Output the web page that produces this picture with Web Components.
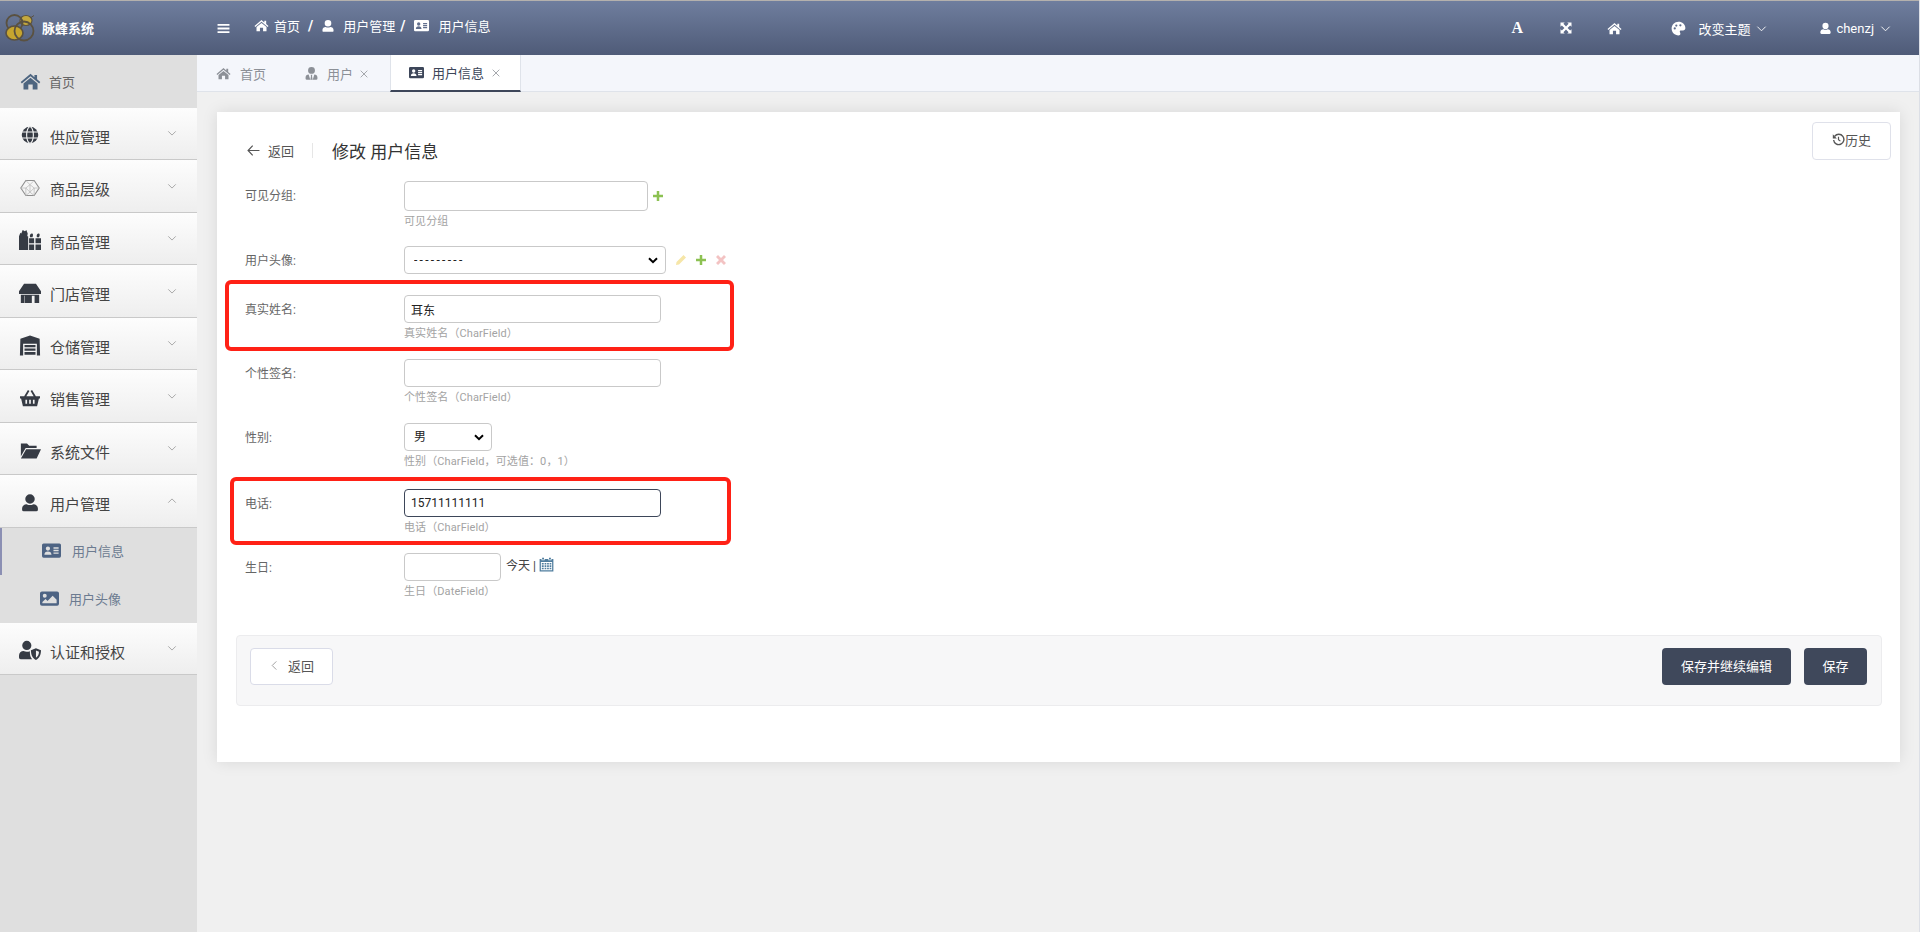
<!DOCTYPE html>
<html lang="zh">
<head>
<meta charset="utf-8">
<title>脉蜂系统</title>
<style>
  html, body { margin: 0; height: 100%; overflow: hidden; }
  body { background: #f0f0f0; font-family: Roboto, "Noto Sans CJK SC", sans-serif; font-size: 12px; color: #666; }
</style>
</head>
<body>
<admin-app>
  <top-bar slot="top"></top-bar>
  <side-menu slot="side">
    <side-item icon="home" home isize="21">首页</side-item>
    <side-item icon="globe" isize="18" chevron="down">供应管理</side-item>
    <side-item icon="hex" chevron="down">商品层级</side-item>
    <side-item icon="gifts" isize="22" chevron="down">商品管理</side-item>
    <side-item icon="store" isize="22" chevron="down">门店管理</side-item>
    <side-item icon="warehouse" isize="23" chevron="down">仓储管理</side-item>
    <side-item icon="basket" chevron="down">销售管理</side-item>
    <side-item icon="folder" isize="21" chevron="down">系统文件</side-item>
    <side-item icon="user" chevron="up">用户管理</side-item>
    <side-sub icon="idcard" active>用户信息</side-sub>
    <side-sub icon="image" style="--sub-left:40px;--sub-gap:10px">用户头像</side-sub>
    <side-item icon="usershield" isize="22" chevron="down" style="height:52px">认证和授权</side-item>
  </side-menu>
  <tab-strip slot="tabs">
    <tab-item icon="home" style="--tab-left:19px;--tab-right:38px;--tab-gap:9px">首页</tab-item>
    <tab-item icon="usertie" closable style="--tab-right:21px;--tab-left:0px;--tab-x:6px">用户</tab-item>
    <tab-item icon="idcard" closable active>用户信息</tab-item>
  </tab-strip>
  <edit-card slot="main">
    <red-mark style="left:8px;top:168px;width:509px;height:71px"></red-mark>
    <red-mark style="left:13px;top:365px;width:501px;height:68px"></red-mark>
    <form-row label="可见分组:" help="可见分组" rowh="65">
      <input style="width:244px;height:30px" aria-label="可见分组">
      <row-tools icons="plus"></row-tools>
    </form-row>
    <form-row label="用户头像:" rowh="49">
      <select style="width:262px;letter-spacing:2.3px" aria-label="用户头像"><option>---------</option></select>
      <row-tools icons="pencil plus cross" style="margin-left:9px"></row-tools>
    </form-row>
    <form-row label="真实姓名:" help="真实姓名（CharField）" rowh="64">
      <input style="width:257px" value="耳东" aria-label="真实姓名">
    </form-row>
    <form-row label="个性签名:" help="个性签名（CharField）" rowh="64">
      <input style="width:257px" aria-label="个性签名">
    </form-row>
    <form-row label="性别:" help="性别（CharField，可选值：0，1）" rowh="66">
      <select style="width:88px" aria-label="性别"><option>男</option></select>
    </form-row>
    <form-row label="电话:" help="电话（CharField）" rowh="64">
      <input class="focus" style="width:257px" value="15711111111" aria-label="电话">
    </form-row>
    <form-row label="生日:" help="生日（DateField）" rowh="82">
      <input style="width:97px" aria-label="生日">
      <today-link></today-link>
    </form-row>
    <submit-panel></submit-panel>
  </edit-card>
</admin-app>

<script>
const ICONS = {
  home: '<path d="M12 3.2.8 12.6l1.3 1.6L12 6l9.900 8.200 1.300-1.600-3.700-3.100v-5h-3V7zM12 7.800 4 14.400V21h5.500v-5.500h5V21H20v-6.600z"/>',
  user: '<path d="M12 1.500a5.700 5.700 0 1 1 0 11.400 5.700 5.700 0 0 1 0-11.400zM8 13.500c1.200.7 2.500 1 4 1s2.800-.3 4-1c3 0 5.500 2.200 5.500 5.200V20a2 2 0 0 1-2 2h-15a2 2 0 0 1-2-2v-1.300c0-3 2.500-5.200 5.500-5.200z"/>',
  usertie: '<path d="M12 1.500a5.500 5.500 0 1 1 0 11 5.500 5.500 0 0 1 0-11zM7.500 13.500 10 22H4.500a2 2 0 0 1-2-2v-1.500c0-3 2-5 5-5zM16.500 13.500c3 0 5 2 5 5V20a2 2 0 0 1-2 2H14zM10.700 14h2.600l-.5 2 1 6h-3.600l1-6z"/>',
  idcard: '<path fill-rule="evenodd" d="M2 3h20a2 2 0 0 1 2 2v14a2 2 0 0 1-2 2H2a2 2 0 0 1-2-2V5a2 2 0 0 1 2-2zM7.500 6.800a2.700 2.700 0 1 0 0 5.400 2.700 2.700 0 0 0 0-5.400zM3 17.500h9c0-2.800-1.700-4.300-4.500-4.300S3 14.700 3 17.500zM14.500 8v1.800h6.500V8zM14.500 11.200V13h6.500v-1.800zM14.500 14.400v1.800h6.500v-1.800z"/>',
  bars: '<path d="M1 3.500h22v3.600H1zM1 10.200h22v3.600H1zM1 16.900h22v3.600H1z"/>',
  globe: '<circle cx="12" cy="12" r="11"/><g fill="none" stroke="#f6f6f6" stroke-width="1.500"><ellipse cx="12" cy="12" rx="4.500" ry="11"/><path d="M1 8h22M1 16h22"/></g>',
  hex: '<g fill="none" stroke="#8f8f8f" stroke-width=".9"><path d="M7 3h10l6 9-6 9H7L1 12z" stroke-width="1.300"/><path d="M7 3 12 8l5-5M1 12h6l5-4 5 4h6M7 21V12M17 21V12M7 12l5 5 5-5M7 21l5-4 5 4M12 8v9" stroke="#b9b9b9"/></g>',
  gifts: '<path d="M0 8l1.500-4 1 .8L4 1l2.500 1.500L8 1l1.500 4-.5 3h1v15H0zM11 10h5.500v5.500H11zM18 10h6v5.500h-6zM11 17h5.500v6H11zM18 17h6v6h-6zM12 9c-.8-3 1.200-4.500 2.500-4 1 .4 1 2.500.2 4zM19.500 9c-.9-2.800 1-4.500 2.300-4 1 .4 1 2.500 0 4z"/>',
  store: '<path fill-rule="evenodd" d="M5.500 2h13L24 10v3H0v-3zM2 14h20v9h-5V15h-3v5H6.500v-5H6v8H2zM6.500 20h7.500v3H6.500z"/>',
  warehouse: '<path fill-rule="evenodd" d="M12 1 1.500 4.500 1 23h3.500V10h15v13H23l-.5-18.500zM6 11.500h12V14H6zM6 15.300h12v2.500H6zM6 19.100h12v3H6z"/>',
  basket: '<path fill-rule="evenodd" d="m5 10 4.500-7.500 1.800 1L7.600 10h8.800l-3.700-6.500 1.800-1L19 10h5v2.500h-1.300L20.500 22h-17L1.300 12.500H0V10zM6.500 14v5H8.500v-5zM11 14v5h2v-5zM15.500 14v5h2v-5z"/>',
  folder: '<path d="M1 4h7l2.500 2.500H19V9H6.500L1 18.500zM7 10.500h17L19 21H1z"/>',
  usershield: '<path fill-rule="evenodd" d="M8.500 2a5 5 0 1 1 0 10 5 5 0 0 1 0-10zM5 13.200c1 .5 2.200.8 3.500.8s2.300-.2 3.300-.6l.2 3.100c.2 2 1 4.200 2.500 5.500H1.800A1.800 1.800 0 0 1 0 20.200v-2C0 15.400 2.200 13.200 5 13.200zM18.500 10l5.500 2.300c0 4.700-1.500 8.700-5.500 10.700-4-2-5.500-6-5.500-10.700zM18.500 12.500v8c2.300-1.500 3.200-4 3.300-6.600z"/>',
  image: '<path fill-rule="evenodd" d="M2.500 3h19A2.500 2.500 0 0 1 24 5.500v13a2.500 2.500 0 0 1-2.500 2.500h-19A2.500 2.500 0 0 1 0 18.500v-13A2.500 2.500 0 0 1 2.500 3zM6 6a2.500 2.500 0 1 0 0 5 2.500 2.500 0 0 0 0-5zM3 18h18v-4.500L16 8.500 9.500 15l-2.500-2.500-4 4z"/>',
  palette: '<path fill-rule="evenodd" d="M12 1C5.800 1 1 5.800 1 12s5 11 11 11c1.900 0 3-1.200 3-2.800 0-1.500-1-2-1-3.300 0-1.100.8-1.900 2-1.900h3.200c2.200 0 3.800-1.700 3.800-4C23 5.200 18 1 12 1zM6 10a1.800 1.800 0 1 0 0 3.600A1.800 1.800 0 0 0 6 10zM8.500 5.500a1.800 1.800 0 1 0 0 3.600 1.800 1.800 0 0 0 0-3.600zM15 5a1.800 1.800 0 1 0 0 3.600A1.800 1.800 0 0 0 15 5z"/>',
  expand: '<path d="M1 1h8.500L6.800 3.700 12 8.900l5.200-5.200L14.500 1H23v8.500l-2.700-2.700L15.100 12l5.200 5.200 2.700-2.700V23h-8.500l2.700-2.700-5.200-5.200-5.200 5.200L9.500 23H1v-8.500l2.700 2.700L8.900 12 3.700 6.800 1 9.500z"/>',
  history: '<g fill="none" stroke="currentColor" stroke-width="2.600"><path d="M5 6a9.500 9.500 0 1 1-2 7"/><path d="M12 7v5.500l3.500 2.500" stroke-width="2.200"/></g><path d="M1.500 2.500v7.500H9z"/>',
  plus: '<path d="M9.500 2h5v7.500H22v5h-7.500V22h-5v-7.500H2v-5h7.500z"/>',
  cross: '<path d="m6 2 6 6 6-6 4 4-6 6 6 6-4 4-6-6-6 6-4-4 6-6-6-6z"/>',
  pencil: '<path d="M17 2l5 5L8 21l-6 1 1-6zM15 6l3 3"/>',
  calendar: '<path fill-rule="evenodd" d="M5 1h3v3H5zM16 1h3v3h-3zM1 3h3v2h5V3h6v2h5V3h3v20H1zM3 8v13h18V8zM4.500 9.500h3v2.500h-3zM9 9.500h2.700v2.500H9zM13 9.500h2.700v2.500H13zM17 9.500h2.700v2.500H17zM4.500 13.300h3v2.500h-3zM9 13.300h2.700v2.500H9zM13 13.300h2.700v2.500H13zM17 13.300h2.700v2.500H17zM4.500 17h3v2.500h-3zM9 17h2.700v2.500H9zM13 17h2.700v2.500H13zM17 17h2.700v2.500H17z"/>',
  down: '<path d="m3 8 9 9 9-9" fill="none" stroke="currentColor" stroke-width="2"/>',
  up: '<path d="m3 16 9-9 9 9" fill="none" stroke="currentColor" stroke-width="2"/>',
  left: '<path d="m16 3-9 9 9 9" fill="none" stroke="currentColor" stroke-width="2"/>',
  back: '<path d="M23 12H2M10.500 3 2 12l8.500 9" fill="none" stroke="currentColor" stroke-width="2.200"/>',
  close: '<path d="m4 4 16 16M20 4 4 20" fill="none" stroke="currentColor" stroke-width="2.400"/>'
};

class FaIcon extends HTMLElement {
  connectedCallback() {
    if (this.shadowRoot) return;
    const size = this.getAttribute('size') || 14;
    const root = this.attachShadow({ mode: 'open' });
    root.innerHTML = `
      <style>:host { display: inline-flex; flex: none; line-height: 0; } svg { display: block; fill: currentColor; }</style>
      <svg width="${size}" height="${size}" viewBox="0 0 24 24" aria-hidden="true">${ICONS[this.getAttribute('name')] || ''}</svg>`;
  }
}
customElements.define('fa-icon', FaIcon);

class AdminApp extends HTMLElement {
  constructor() {
    super();
    this.attachShadow({ mode: 'open' }).innerHTML = `
      <style>
        :host { display: grid; grid-template-columns: 197px 1fr; grid-template-rows: 55px 37px 1fr; height: 100vh; box-sizing: border-box; border-right: 1px solid #dcdfe6; }
        .top { grid-column: 1 / 3; display: block; }
        .side { grid-row: 2 / 4; background: #dfdfdf; }
        main { padding: 20px 19px 0 20px; min-width: 0; }
      </style>
      <div class="top"><slot name="top"></slot></div>
      <div class="side"><slot name="side"></slot></div>
      <div><slot name="tabs"></slot></div>
      <main><slot name="main"></slot></main>`;
  }
}
customElements.define('admin-app', AdminApp);

class TopBar extends HTMLElement {
  constructor() {
    super();
    this.attachShadow({ mode: 'open' }).innerHTML = `
      <style>
        :host { display: flex; align-items: center; height: 55px; box-sizing: border-box; border-top: 1px solid #b4b1ad;
          background: linear-gradient(#6f7e9e, #4f5b78); color: #fff; font-size: 13px; }
        .brand { width: 197px; display: flex; align-items: center; padding-left: 4px; box-sizing: border-box; font-weight: 700; height: 100%; }
        .brand span { margin-left: 7px; margin-top: -2px; }
        .crumbs { display: flex; align-items: center; margin-left: 24px; margin-top: -5px; }
        .right { margin-left: auto; display: flex; align-items: center; padding-right: 28px; }
        .sep { font-weight: 700; font-size: 14px; }
        .glyph { font: 700 16px "Liberation Serif", serif; width: 12px; text-align: center; }
        .latin { font-size: 13px; }
      </style>
      <div class="brand">
        <svg width="31" height="30" viewBox="0 0 31 30" aria-hidden="true">
          <ellipse cx="22" cy="7.500" rx="6" ry="5" fill="#c4a83e" stroke="#5a5140" stroke-width="1.200"/>
          <path d="M27 4.500l3-2" stroke="#5a5140" stroke-width="1"/>
          <circle cx="10.500" cy="10" r="8" fill="none" stroke="#5a5140" stroke-width="1.800"/>
          <ellipse cx="10.500" cy="20" rx="8.500" ry="7" fill="#c6a52f" stroke="#5a5140" stroke-width="1.600"/>
          <circle cx="20" cy="18" r="9.500" fill="none" stroke="#5a5140" stroke-width="1.800"/>
        </svg>
        <span>脉蜂系统</span>
      </div>
      <fa-icon name="bars" size="13" style="margin-left:20px"></fa-icon>
      <div class="crumbs">
        <fa-icon name="home" size="15"></fa-icon><span style="margin-left:5px">首页</span>
        <span class="sep" style="margin:0 8px">/</span>
        <fa-icon name="user" size="14"></fa-icon><span style="margin-left:8px">用户管理</span>
        <span class="sep" style="margin:0 9px 0 5px">/</span>
        <fa-icon name="idcard" size="15"></fa-icon><span style="margin-left:9px">用户信息</span>
      </div>
      <div class="right">
        <span class="glyph">A</span>
        <fa-icon name="expand" size="12" style="margin-left:37px"></fa-icon>
        <fa-icon name="home" size="15" style="margin-left:35px"></fa-icon>
        <fa-icon name="palette" size="15" style="margin-left:49px"></fa-icon>
        <span style="margin-left:12px">改变主题</span>
        <fa-icon name="down" size="11" style="margin-left:6px"></fa-icon>
        <fa-icon name="user" size="13" style="margin-left:52px"></fa-icon>
        <span class="latin" style="margin-left:4px">chenzj</span>
        <fa-icon name="down" size="11" style="margin-left:6px"></fa-icon>
      </div>`;
  }
}
customElements.define('top-bar', TopBar);

class SideMenu extends HTMLElement {
  constructor() {
    super();
    this.attachShadow({ mode: 'open' }).innerHTML = `
      <style>:host { display: block; }</style><slot></slot>`;
  }
}
customElements.define('side-menu', SideMenu);

class SideItem extends HTMLElement {
  connectedCallback() {
    if (this.shadowRoot) return;
    const chev = this.getAttribute('chevron');
    this.attachShadow({ mode: 'open' }).innerHTML = `
      <style>
        :host { display: flex; align-items: center; height: 52.5px; box-sizing: border-box; padding: 0 20px 0 19px;
          background: linear-gradient(#fdfdfd, #eeeeee); border-bottom: 1px solid #c9c9c9; font-size: 15px; color: #444; }
        :host([home]) { background: #dfdfdf; border: 0; height: 52.5px; font-size: 13px; color: #666; }
        :host([home]) fa-icon { color: #4d6580; margin-top: 0; }
        :host([home]) .label { margin-top: 0; margin-left: 8px; }
        fa-icon.main { color: #363b44; width: 22px; justify-content: center; margin-top: 4px; }
        .label { margin-left: 9px; margin-top: 6px; flex: 1; white-space: nowrap; }
        .chev { color: #9a9a9a; }
      </style>
      <fa-icon class="main" name="${this.getAttribute('icon')}" size="${this.getAttribute('isize') || 20}"></fa-icon>
      <span class="label"><slot></slot></span>
      ${chev ? `<fa-icon class="chev" name="${chev}" size="10"></fa-icon>` : ''}`;
  }
}
customElements.define('side-item', SideItem);

class SideSub extends HTMLElement {
  connectedCallback() {
    if (this.shadowRoot) return;
    this.attachShadow({ mode: 'open' }).innerHTML = `
      <style>
        :host { display: flex; align-items: center; height: 47.5px; box-sizing: border-box; padding-left: var(--sub-left, 40px); padding-bottom: 1px;
          background: #dfdfdf; font-size: 13px; color: #6c7b90; }
        :host([active]) { border-left: 2px solid #8b8fb3; padding-left: 40px; }
        fa-icon { color: #4e6484; }
        span { margin-left: var(--sub-gap, 11px); }
      </style>
      <fa-icon name="${this.getAttribute('icon')}" size="19"></fa-icon>
      <span><slot></slot></span>`;
  }
}
customElements.define('side-sub', SideSub);

class TabStrip extends HTMLElement {
  constructor() {
    super();
    this.attachShadow({ mode: 'open' }).innerHTML = `
      <style>:host { display: flex; height: 37px; box-sizing: border-box; background: #f4f6fb; border-bottom: 1px solid #dfe3ea; }</style>
      <slot></slot>`;
  }
}
customElements.define('tab-strip', TabStrip);

class TabItem extends HTMLElement {
  connectedCallback() {
    if (this.shadowRoot) return;
    const close = this.hasAttribute('closable') ? '<fa-icon class="x" name="close" size="10"></fa-icon>' : '';
    this.attachShadow({ mode: 'open' }).innerHTML = `
      <style>
        :host { display: flex; align-items: center; height: 37px; box-sizing: border-box; font-size: 13px; color: #8c9097;
          padding: 0 var(--tab-right, 19px) 0 var(--tab-left, 19px); }
        :host([active]) { background: #fff; color: #3d4659; border-left: 1px solid #dfe3ea; border-right: 1px solid #dfe3ea;
          border-bottom: 2px solid #3d4659; padding: 0 19px 0 18px; }
        span { margin-left: var(--tab-gap, 8px); }
        .x { margin-left: var(--tab-x, 7px); color: #a5a8ad; }
      </style>
      <fa-icon name="${this.getAttribute('icon')}" size="15"></fa-icon>
      <span><slot></slot></span>${close}`;
  }
}
customElements.define('tab-item', TabItem);

class EditCard extends HTMLElement {
  constructor() {
    super();
    this.attachShadow({ mode: 'open' }).innerHTML = `
      <style>
        :host { display: block; position: relative; background: #fff; box-shadow: 0 0 15px rgba(0, 0, 0, .1); padding: 10px 0 56px; height: 650px; box-sizing: border-box; }
        .head { display: flex; justify-content: space-between; align-items: flex-start; height: 59px; padding-left: 30px; padding-right: 9px; }
        .left { display: flex; align-items: center; height: 20px; margin-top: 18px; color: #555; font-size: 13px; }
        .back { margin-left: 8px; }
        .rule { width: 1px; height: 15px; background: #e6e6e6; margin: 0 19px 0 18px; }
        h1 { margin: 0; font-size: 17px; font-weight: 400; color: #333; }
        button { display: flex; align-items: center; justify-content: center; box-sizing: border-box; width: 79px; height: 38px;
          background: #fff; border: 1px solid #dfe1ea; border-radius: 4px; font: inherit; font-size: 13px; color: #555; padding: 0 0 3px 0; }
      </style>
      <div class="head">
        <div class="left">
          <fa-icon name="back" size="13"></fa-icon><span class="back">返回</span><i class="rule"></i><h1>修改 用户信息</h1>
        </div>
        <button type="button"><fa-icon name="history" size="13"></fa-icon>历史</button>
      </div>
      <slot></slot>`;
  }
}
customElements.define('edit-card', EditCard);

class FormRow extends HTMLElement {
  connectedCallback() {
    if (this.shadowRoot) return;
    const help = this.getAttribute('help');
    const arrow = "url(\"data:image/svg+xml,%3Csvg xmlns='http://www.w3.org/2000/svg' width='10' height='7' viewBox='0 0 10 7'%3E%3Cpath d='M1 1.200l4 4 4-4' fill='none' stroke='%23000' stroke-width='2'/%3E%3C/svg%3E\")";
    this.attachShadow({ mode: 'open' }).innerHTML = `
      <style>
        :host { display: flex; height: ${this.getAttribute('rowh')}px; padding-left: 28px; color: #666; font-size: 12px; }
        label { width: 159px; flex: none; line-height: 30px; }
        .ctl { display: flex; align-items: center; }
        .help { font-size: 11px; line-height: 16px; margin-top: 3px; color: #a3a3a3; letter-spacing: .1px; }
        ::slotted(input), ::slotted(select) { box-sizing: border-box; height: 28px; border: 1px solid #c9c9c9; border-radius: 4px;
          background: #fff; font: 12px Roboto, "Noto Sans CJK SC", sans-serif; color: #222; outline: 0; margin: 0; }
        ::slotted(input) { padding: 0 6px; }
        ::slotted(input.focus) { border-color: #3d4659; }
        ::slotted(select) { padding: 0 0 0 9px; appearance: none; background: #fff ${arrow} no-repeat right 7px center; }
      </style>
      <label>${this.getAttribute('label')}</label>
      <div>
        <div class="ctl"><slot></slot></div>
        ${help ? `<div class="help">${help}</div>` : ''}
      </div>`;
  }
}
customElements.define('form-row', FormRow);

class RowTools extends HTMLElement {
  connectedCallback() {
    if (this.shadowRoot) return;
    const colors = { plus: '#8cc152', pencil: '#f6e6a8', cross: '#f3c3c3' };
    const icons = this.getAttribute('icons').split(' ').map(n => `<fa-icon name="${n}" size="12" style="color:${colors[n]}"></fa-icon>`).join('');
    this.attachShadow({ mode: 'open' }).innerHTML = `
      <style>:host { display: inline-flex; align-items: center; gap: 8px; margin-left: 4px; }</style>${icons}`;
  }
}
customElements.define('row-tools', RowTools);

class TodayLink extends HTMLElement {
  constructor() {
    super();
    this.attachShadow({ mode: 'open' }).innerHTML = `
      <style>:host { display: inline-flex; align-items: center; margin-left: 5px; color: #444; font-size: 12px; margin-top: -5px; }
        fa-icon { color: #4f7d9e; margin-left: 3px; }</style>
      今天 | <fa-icon name="calendar" size="15"></fa-icon>`;
  }
}
customElements.define('today-link', TodayLink);

class RedMark extends HTMLElement {
  constructor() {
    super();
    this.attachShadow({ mode: 'open' }).innerHTML = `
      <style>:host { display: block; position: absolute; box-sizing: border-box; border: 4px solid #ff2116; border-radius: 6px; pointer-events: none; }</style>`;
  }
}
customElements.define('red-mark', RedMark);

class SubmitPanel extends HTMLElement {
  constructor() {
    super();
    this.attachShadow({ mode: 'open' }).innerHTML = `
      <style>
        :host { display: flex; align-items: flex-start; height: 71px; box-sizing: border-box; margin: 0 18px 0 19px; padding: 12px 14px 0 13px; gap: 13px;
          background: #f7f7f8; border: 1px solid #ececee; border-radius: 4px; }
        button { height: 37px; box-sizing: border-box; border-radius: 4px; font: 13px Roboto, "Noto Sans CJK SC", sans-serif; display: flex; align-items: center; justify-content: center; padding: 0 0 2px; }
        .back { width: 83px; background: #fff; border: 1px solid #dadce8; color: #555; margin-right: auto; gap: 8px; }
        .back fa-icon { color: #999; }
        .dark { background: #3f485b; color: #fff; border: 0; }
      </style>
      <button class="back" type="button"><fa-icon name="left" size="11"></fa-icon>返回</button>
      <button class="dark" type="button" style="width:129px">保存并继续编辑</button>
      <button class="dark" type="button" style="width:63px">保存</button>`;
  }
}
customElements.define('submit-panel', SubmitPanel);
</script>
</body>
</html>
